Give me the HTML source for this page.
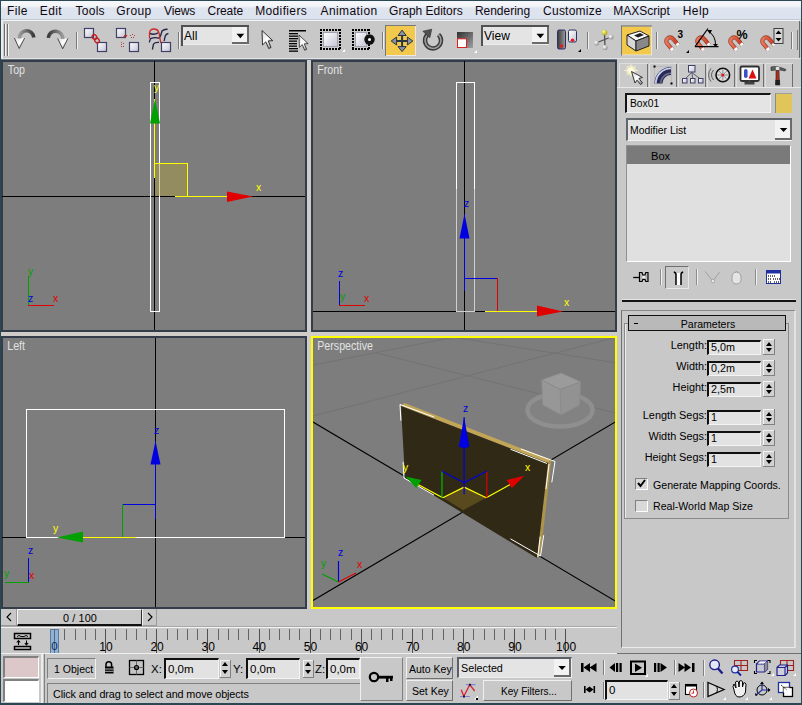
<!DOCTYPE html><html><head><meta charset="utf-8"><style>
html,body{margin:0;padding:0;width:802px;height:705px;overflow:hidden;background:#c8c8c8;font-family:"Liberation Sans", sans-serif;}
div{box-sizing:border-box;}
</style></head><body>
<div style="position:absolute;left:0px;top:0px;width:802px;height:19px;background:linear-gradient(#f6f7fa 0px,#f3f5f9 6px,#dfe5ef 8px,#dce3ee 18px);"></div>
<div style="position:absolute;left:0px;top:19px;width:802px;height:1px;background:#c4cad4;"></div>
<div style="position:absolute;left:0px;top:20px;width:802px;height:1px;background:#f4f4f4;"></div>
<div style="position:absolute;left:7.1px;top:4.84px;font-size:12px;line-height:12px;color:#100810;white-space:nowrap;transform-origin:0 0;letter-spacing:0.35px;">File</div>
<div style="position:absolute;left:39.8px;top:4.84px;font-size:12px;line-height:12px;color:#100810;white-space:nowrap;transform-origin:0 0;letter-spacing:0.38px;">Edit</div>
<div style="position:absolute;left:75.6px;top:4.84px;font-size:12px;line-height:12px;color:#100810;white-space:nowrap;transform-origin:0 0;letter-spacing:0.23px;">Tools</div>
<div style="position:absolute;left:116.3px;top:4.84px;font-size:12px;line-height:12px;color:#100810;white-space:nowrap;transform-origin:0 0;letter-spacing:0.4px;">Group</div>
<div style="position:absolute;left:164.1px;top:4.84px;font-size:12px;line-height:12px;color:#100810;white-space:nowrap;transform-origin:0 0;letter-spacing:-0.17px;">Views</div>
<div style="position:absolute;left:207.6px;top:4.84px;font-size:12px;line-height:12px;color:#100810;white-space:nowrap;transform-origin:0 0;letter-spacing:-0.11px;">Create</div>
<div style="position:absolute;left:255.2px;top:4.84px;font-size:12px;line-height:12px;color:#100810;white-space:nowrap;transform-origin:0 0;letter-spacing:0.36px;">Modifiers</div>
<div style="position:absolute;left:320.5px;top:4.84px;font-size:12px;line-height:12px;color:#100810;white-space:nowrap;transform-origin:0 0;letter-spacing:0.41px;">Animation</div>
<div style="position:absolute;left:389.1px;top:4.84px;font-size:12px;line-height:12px;color:#100810;white-space:nowrap;transform-origin:0 0;letter-spacing:-0.04px;">Graph Editors</div>
<div style="position:absolute;left:474.9px;top:4.84px;font-size:12px;line-height:12px;color:#100810;white-space:nowrap;transform-origin:0 0;letter-spacing:-0.01px;">Rendering</div>
<div style="position:absolute;left:543.1px;top:4.84px;font-size:12px;line-height:12px;color:#100810;white-space:nowrap;transform-origin:0 0;letter-spacing:0.23px;">Customize</div>
<div style="position:absolute;left:613.2px;top:4.84px;font-size:12px;line-height:12px;color:#100810;white-space:nowrap;transform-origin:0 0;letter-spacing:-0.01px;">MAXScript</div>
<div style="position:absolute;left:682.8px;top:4.84px;font-size:12px;line-height:12px;color:#100810;white-space:nowrap;transform-origin:0 0;letter-spacing:0.38px;">Help</div>
<div style="position:absolute;left:0px;top:58px;width:802px;height:1px;background:#e4e4e4;"></div>
<svg width="802" height="60" style="position:absolute;left:0;top:0;"><defs><linearGradient id="gsq" x1="0" y1="0" x2="1" y2="1"><stop offset="0" stop-color="#ffffff"/><stop offset="1" stop-color="#c4c4d4"/></linearGradient><linearGradient id="garc" x1="0" y1="0" x2="1" y2="0"><stop offset="0" stop-color="#9a9a9a"/><stop offset="1" stop-color="#3a3a3a"/></linearGradient><linearGradient id="garc2" x1="0" y1="0" x2="1" y2="0"><stop offset="0" stop-color="#3a3a3a"/><stop offset="1" stop-color="#9a9a9a"/></linearGradient><linearGradient id="gtri" x1="0" y1="0" x2="1" y2="1"><stop offset="0" stop-color="#d8d8d8"/><stop offset="0.5" stop-color="#ffffff"/><stop offset="1" stop-color="#808080"/></linearGradient><linearGradient id="gmag" x1="0" y1="0" x2="1" y2="1"><stop offset="0" stop-color="#f09070"/><stop offset="1" stop-color="#c83018"/></linearGradient><linearGradient id="gscl" x1="0" y1="0" x2="1" y2="1"><stop offset="0" stop-color="#303030"/><stop offset="1" stop-color="#a0a0a0"/></linearGradient><radialGradient id="gball" cx="0.35" cy="0.35" r="0.7"><stop offset="0" stop-color="#ffffff"/><stop offset="1" stop-color="#909090"/></radialGradient><radialGradient id="gballY" cx="0.35" cy="0.35" r="0.7"><stop offset="0" stop-color="#ffffa0"/><stop offset="1" stop-color="#b0a000"/></radialGradient></defs><rect x="1" y="21" width="2" height="37" fill="#ececec"/><rect x="4" y="24" width="1" height="32" fill="#707070"/><rect x="5" y="24" width="1" height="32" fill="#f4f4f4"/><rect x="7" y="24" width="1" height="32" fill="#707070"/><rect x="8" y="24" width="1" height="32" fill="#f4f4f4"/><rect x="76" y="32" width="1" height="17" fill="#7a7a7a"/><rect x="77" y="32" width="1" height="17" fill="#f0f0f0"/><rect x="178" y="32" width="1" height="17" fill="#7a7a7a"/><rect x="179" y="32" width="1" height="17" fill="#f0f0f0"/><rect x="382" y="32" width="1" height="17" fill="#7a7a7a"/><rect x="383" y="32" width="1" height="17" fill="#f0f0f0"/><rect x="587" y="32" width="1" height="17" fill="#7a7a7a"/><rect x="588" y="32" width="1" height="17" fill="#f0f0f0"/><rect x="656" y="32" width="1" height="17" fill="#7a7a7a"/><rect x="657" y="32" width="1" height="17" fill="#f0f0f0"/><rect x="791" y="32" width="1" height="17" fill="#7a7a7a"/><rect x="792" y="32" width="1" height="17" fill="#f0f0f0"/><path d="M14.4 38 L24.6 38 L19.2 48.5 Z" fill="url(#gtri)"/><path d="M14.4 38 L19.2 48.5 L24.6 38" fill="none" stroke="#3a3a3a" stroke-width="0.9"/><path d="M19.4 38.5 A7.2 7.2 0 0 1 33.8 37.5" stroke="url(#garc)" stroke-width="3.6" fill="none"/><path d="M57.7 38.4 L67.9 38.4 L62.7 48.8 Z" fill="url(#gtri)"/><path d="M57.7 38.4 L62.7 48.8 L67.9 38.4" fill="none" stroke="#3a3a3a" stroke-width="0.9"/><path d="M48.3 37.9 A7.2 7.2 0 0 1 62.7 38.9" stroke="url(#garc2)" stroke-width="3.6" fill="none"/><rect x="84.5" y="28.5" width="9" height="9" fill="url(#gsq)" stroke="#40406a" stroke-width="1.2"/><rect x="97.5" y="42.5" width="9" height="9" fill="url(#gsq)" stroke="#40406a" stroke-width="1.2"/><ellipse cx="94.5" cy="37" rx="2.6" ry="2.1" transform="rotate(45 94.5 37)" fill="none" stroke="#c02020" stroke-width="1.3"/><ellipse cx="97" cy="40.5" rx="2.6" ry="2.1" transform="rotate(45 97 40.5)" fill="none" stroke="#c02020" stroke-width="1.3"/><rect x="116.5" y="28.5" width="9" height="9" fill="url(#gsq)" stroke="#40406a" stroke-width="1.2"/><rect x="129.5" y="42.5" width="9" height="9" fill="url(#gsq)" stroke="#40406a" stroke-width="1.2"/><path d="M123.5 38 Q125 34 127 36" stroke="#c02020" stroke-width="1.3" fill="none"/><rect x="130" y="35" width="1" height="1" fill="#c04040"/><rect x="132" y="34" width="1" height="1" fill="#c04040"/><rect x="134" y="35" width="1" height="1" fill="#c04040"/><rect x="131" y="37" width="1" height="1" fill="#c04040"/><rect x="133" y="37" width="1" height="1" fill="#c04040"/><rect x="121" y="42" width="1" height="1" fill="#c04040"/><rect x="121" y="44" width="1" height="1" fill="#c04040"/><rect x="123" y="43" width="1" height="1" fill="#c04040"/><rect x="121" y="46" width="1" height="1" fill="#c04040"/><rect x="123" y="46" width="1" height="1" fill="#c04040"/><path d="M149.3 33.1 Q153.9 35.6 158.2 32.7 M149.3 42.4 L150.5 38.6 Q155 37 159 38.2 Q161 36 162 31 Q164 29 167.6 29.3 M152.4 49.5 L153.5 44.1 Q155 42 159 42.4 M164.1 41.2 L165.2 36 Q166 34 168.4 33.5" stroke="#22224a" stroke-width="1.3" fill="none"/><path d="M149.5 38.6 L149.5 33 Q150 29 153.8 29 Q158 29 159 33 L160.8 43" stroke="#d02828" stroke-width="1.3" fill="none"/><rect x="161.5" y="42.5" width="9" height="9" fill="url(#gsq)" stroke="#40406a" stroke-width="1.2"/><rect x="181" y="25" width="68" height="20" fill="#e4e4e4"/><rect x="181" y="44" width="68" height="1" fill="#ececec"/><rect x="181" y="25" width="68" height="2" fill="#505050"/><rect x="181" y="25" width="2" height="21" fill="#505050"/><rect x="232" y="27" width="17" height="17" fill="#f2f2f2"/><rect x="247" y="27" width="2" height="17" fill="#6a6a6a"/><rect x="232" y="42" width="17" height="2" fill="#6a6a6a"/><path d="M236.5 33.7 L244.2 33.7 L240.35 38.2 Z" fill="#000"/><text x="184" y="40" font-size="12" font-family="Liberation Sans" fill="#000">All</text><path transform="translate(262 30.5) scale(1)" d="M0 0 L0.5 14.5 L3.8 11.3 L6.7 18 L9 17 L6.3 10.4 L10.8 10.2 Z" fill="url(#gtri)" stroke="#202020" stroke-width="0.9"/><rect x="289" y="30" width="17" height="1.5" fill="#000"/><rect x="289" y="33.0" width="9" height="1.3" fill="#000"/><rect x="289" y="35.5" width="9" height="1.3" fill="#000"/><rect x="289" y="38.0" width="9" height="1.3" fill="#000"/><rect x="289" y="40.5" width="8" height="1.3" fill="#000"/><rect x="289" y="43.0" width="8" height="1.3" fill="#000"/><rect x="289" y="45.5" width="8" height="1.3" fill="#000"/><rect x="289" y="48.0" width="9" height="1.3" fill="#000"/><rect x="289" y="50.5" width="9" height="1.3" fill="#000"/><path transform="translate(299 35) scale(0.85)" d="M0 0 L0.5 14.5 L3.8 11.3 L6.7 18 L9 17 L6.3 10.4 L10.8 10.2 Z" fill="url(#gtri)" stroke="#202020" stroke-width="0.9"/><rect x="320" y="29" width="2" height="2" fill="#000"/><rect x="320" y="48" width="2" height="2" fill="#000"/><rect x="323" y="29" width="2" height="2" fill="#000"/><rect x="323" y="48" width="2" height="2" fill="#000"/><rect x="326" y="29" width="2" height="2" fill="#000"/><rect x="326" y="48" width="2" height="2" fill="#000"/><rect x="329" y="29" width="2" height="2" fill="#000"/><rect x="329" y="48" width="2" height="2" fill="#000"/><rect x="332" y="29" width="2" height="2" fill="#000"/><rect x="332" y="48" width="2" height="2" fill="#000"/><rect x="335" y="29" width="2" height="2" fill="#000"/><rect x="335" y="48" width="2" height="2" fill="#000"/><rect x="338" y="29" width="2" height="2" fill="#000"/><rect x="338" y="48" width="2" height="2" fill="#000"/><rect x="320" y="29" width="2" height="2" fill="#000"/><rect x="339" y="29" width="2" height="2" fill="#000"/><rect x="320" y="32" width="2" height="2" fill="#000"/><rect x="339" y="32" width="2" height="2" fill="#000"/><rect x="320" y="35" width="2" height="2" fill="#000"/><rect x="339" y="35" width="2" height="2" fill="#000"/><rect x="320" y="38" width="2" height="2" fill="#000"/><rect x="339" y="38" width="2" height="2" fill="#000"/><rect x="320" y="41" width="2" height="2" fill="#000"/><rect x="339" y="41" width="2" height="2" fill="#000"/><rect x="320" y="44" width="2" height="2" fill="#000"/><rect x="339" y="44" width="2" height="2" fill="#000"/><rect x="320" y="47" width="2" height="2" fill="#000"/><rect x="339" y="47" width="2" height="2" fill="#000"/><rect x="323.5" y="32.5" width="14" height="14" fill="url(#gsq)" stroke="#a0a0b0" stroke-width="1"/><path d="M342 52 L345 49 L345 52 Z" fill="#fff"/><rect x="352" y="29" width="2" height="2" fill="#000"/><rect x="352" y="48" width="2" height="2" fill="#000"/><rect x="355" y="29" width="2" height="2" fill="#000"/><rect x="355" y="48" width="2" height="2" fill="#000"/><rect x="358" y="29" width="2" height="2" fill="#000"/><rect x="358" y="48" width="2" height="2" fill="#000"/><rect x="361" y="29" width="2" height="2" fill="#000"/><rect x="361" y="48" width="2" height="2" fill="#000"/><rect x="364" y="29" width="2" height="2" fill="#000"/><rect x="364" y="48" width="2" height="2" fill="#000"/><rect x="367" y="29" width="2" height="2" fill="#000"/><rect x="367" y="48" width="2" height="2" fill="#000"/><rect x="352" y="29" width="2" height="2" fill="#000"/><rect x="368" y="29" width="2" height="2" fill="#000"/><rect x="352" y="32" width="2" height="2" fill="#000"/><rect x="368" y="32" width="2" height="2" fill="#000"/><rect x="352" y="35" width="2" height="2" fill="#000"/><rect x="368" y="35" width="2" height="2" fill="#000"/><rect x="352" y="38" width="2" height="2" fill="#000"/><rect x="368" y="38" width="2" height="2" fill="#000"/><rect x="352" y="41" width="2" height="2" fill="#000"/><rect x="368" y="41" width="2" height="2" fill="#000"/><rect x="352" y="44" width="2" height="2" fill="#000"/><rect x="368" y="44" width="2" height="2" fill="#000"/><rect x="352" y="47" width="2" height="2" fill="#000"/><rect x="368" y="47" width="2" height="2" fill="#000"/><rect x="355.5" y="32.5" width="11" height="14" fill="url(#gsq)" stroke="#a0a0b0" stroke-width="1"/><circle cx="369.5" cy="39.5" r="5.2" fill="#101010"/><circle cx="369.5" cy="39.5" r="1.5" fill="#fff"/><rect x="385" y="25" width="31" height="31" fill="#a8a8a8"/><rect x="386" y="26" width="30" height="30" fill="#e8e8e8"/><rect x="386" y="26" width="29" height="29" fill="#f2c94c"/><rect x="385" y="25" width="31" height="1" fill="#787878"/><rect x="385" y="25" width="1" height="31" fill="#787878"/><path d="M402.1 33 L402.1 49 M394 41 L410 41" stroke="#2c3440" stroke-width="2"/><path d="M402.1 30.1 L398 35.5 L406.2 35.5 Z M402.1 51.6 L398 46.6 L406.2 46.6 Z M391.2 41 L396.6 37 L396.6 45 Z M412.8 41 L407.4 37 L407.4 45 Z" fill="#8a929c" stroke="#2c3440" stroke-width="1"/><path d="M438.5 34.6 A8 8 0 1 1 429.8 33.1" stroke="#3a3a3a" stroke-width="4.4" fill="none"/><path d="M438.5 34.6 A8 8 0 1 1 429.8 33.1" stroke="#b8b8b8" stroke-width="1.6" fill="none" opacity="0.8"/><path d="M422.8 31.2 L431.8 29.2 L429.8 37.8 Z" fill="#505050" stroke="#303030" stroke-width="0.6"/><rect x="457" y="32" width="16" height="16" fill="url(#gscl)"/><rect x="457.5" y="38.8" width="9" height="8.7" fill="#fff" stroke="#e02020" stroke-width="1"/><path d="M474 53 L477 50 L477 53 Z" fill="#fff"/><rect x="481" y="25" width="68" height="20" fill="#e4e4e4"/><rect x="481" y="44" width="68" height="1" fill="#ececec"/><rect x="481" y="25" width="68" height="2" fill="#505050"/><rect x="481" y="25" width="2" height="21" fill="#505050"/><rect x="532" y="27" width="17" height="17" fill="#f2f2f2"/><rect x="547" y="27" width="2" height="17" fill="#6a6a6a"/><rect x="532" y="42" width="17" height="2" fill="#6a6a6a"/><path d="M536.5 33.7 L544.2 33.7 L540.35 38.2 Z" fill="#000"/><text x="484" y="40" font-size="12" font-family="Liberation Sans" fill="#000">View</text><rect x="557.5" y="30" width="8" height="19" rx="1.5" fill="url(#garc2)" stroke="#303068" stroke-width="1"/><rect x="568.5" y="30" width="8" height="12" rx="1.5" fill="url(#gsq)" stroke="#303068" stroke-width="1"/><circle cx="561.5" cy="46" r="1.8" fill="#e02020"/><circle cx="572.5" cy="40.2" r="1.8" fill="#e02020"/><path d="M578 52 L581 49 L581 52 Z" fill="#000"/><path d="M604.5 33 L605 47 M596 43 L611 37" stroke="#505050" stroke-width="1.3"/><circle cx="604.5" cy="32.5" r="2.8" fill="url(#gballY)"/><circle cx="611" cy="37" r="2.6" fill="url(#gball)"/><circle cx="596.5" cy="43" r="2.6" fill="url(#gball)"/><circle cx="605" cy="47.5" r="2.6" fill="url(#gball)"/><rect x="621" y="25.5" width="31" height="30" fill="#a8a8a8"/><rect x="622" y="26.5" width="30" height="29" fill="#e8e8e8"/><rect x="622" y="26.5" width="29" height="28" fill="#f2c94c"/><rect x="621" y="25.5" width="31" height="1" fill="#787878"/><rect x="621" y="25.5" width="1" height="30" fill="#787878"/><path d="M627 35 L640 31 L649 36 L636 41 Z" fill="#f8f8f8" stroke="#202020" stroke-width="1"/><path d="M627 35 L636 41 L636 51 L627 45 Z" fill="#d8d8d8" stroke="#202020" stroke-width="1"/><path d="M636 41 L649 36 L649 46 L636 51 Z" fill="#888888" stroke="#202020" stroke-width="1"/><path d="M634 35.5 L640 33 L644 35 L638 37.5 Z" fill="#202020"/><g transform="translate(664 35) rotate(-40 7 8)"><path d="M2 6 A5.5 5.5 0 0 1 13 6 L13 14 L9.5 14 L9.5 6 A2 2 0 0 0 5.5 6 L5.5 14 L2 14 Z" fill="url(#gmag)" stroke="#802010" stroke-width="0.6"/><rect x="2" y="12" width="3.5" height="2.5" fill="#fff"/><rect x="9.5" y="12" width="3.5" height="2.5" fill="#fff"/></g><g transform="translate(695 35) rotate(-40 7 8)"><path d="M2 6 A5.5 5.5 0 0 1 13 6 L13 14 L9.5 14 L9.5 6 A2 2 0 0 0 5.5 6 L5.5 14 L2 14 Z" fill="url(#gmag)" stroke="#802010" stroke-width="0.6"/><rect x="2" y="12" width="3.5" height="2.5" fill="#fff"/><rect x="9.5" y="12" width="3.5" height="2.5" fill="#fff"/></g><g transform="translate(728 35) rotate(-40 7 8)"><path d="M2 6 A5.5 5.5 0 0 1 13 6 L13 14 L9.5 14 L9.5 6 A2 2 0 0 0 5.5 6 L5.5 14 L2 14 Z" fill="url(#gmag)" stroke="#802010" stroke-width="0.6"/><rect x="2" y="12" width="3.5" height="2.5" fill="#fff"/><rect x="9.5" y="12" width="3.5" height="2.5" fill="#fff"/></g><g transform="translate(760 35) rotate(-40 7 8)"><path d="M2 6 A5.5 5.5 0 0 1 13 6 L13 14 L9.5 14 L9.5 6 A2 2 0 0 0 5.5 6 L5.5 14 L2 14 Z" fill="url(#gmag)" stroke="#802010" stroke-width="0.6"/><rect x="2" y="12" width="3.5" height="2.5" fill="#fff"/><rect x="9.5" y="12" width="3.5" height="2.5" fill="#fff"/></g><text x="677.5" y="38" font-size="10" font-weight="bold" font-family="Liberation Sans" fill="#000">3</text><path d="M686 53 L689 50 L689 53 Z" fill="#000"/><path d="M695 46.7 L718.5 46.7 M695 46.7 L708 28.5" stroke="#000" stroke-width="1.2" fill="none"/><path d="M709 31.5 A16 16 0 0 1 715.5 45" stroke="#000" stroke-width="1" fill="none"/><path d="M707 30 L712 30 L710 34 Z M713 44 L718 44 L715.5 47 Z" fill="#000"/><text x="736.5" y="38.8" font-size="12.5" font-weight="bold" font-family="Liberation Sans" fill="#000">%</text><rect x="774" y="28.5" width="9" height="15" fill="#d8d8d8" stroke="#404040" stroke-width="1"/><path d="M775.5 34 L778.5 30.5 L781.5 34 Z M775.5 38 L778.5 41.5 L781.5 38 Z" fill="#000"/><rect x="797" y="30" width="1" height="20" fill="#7a7a7a"/><rect x="799" y="21" width="1" height="37" fill="#6a6a6a"/></svg>
<div style="position:absolute;left:0px;top:59px;width:617px;height:1px;background:#6a7480;"></div>
<div style="position:absolute;left:0px;top:60px;width:617px;height:549px;background:#d0cdc8;"></div>
<div style="position:absolute;left:1px;top:60px;width:306px;height:272px;background:#7d7d7d;border:2px solid #333d4a;"></div>
<div style="position:absolute;left:311px;top:60px;width:306px;height:272px;background:#7d7d7d;border:2px solid #333d4a;"></div>
<div style="position:absolute;left:1px;top:336px;width:306px;height:273px;background:#7d7d7d;border:2px solid #333d4a;"></div>
<div style="position:absolute;left:311px;top:336px;width:306px;height:273px;background:#7d7d7d;border:2px solid #ffff00;"></div>
<div style="position:absolute;left:619px;top:63px;width:29px;height:24px;background:#cacaca;box-shadow: inset 1px 1px 0 #dedede, inset -1px 0 0 #6e6e6e;"></div>
<div style="position:absolute;left:649px;top:63px;width:28px;height:24px;background:#cacaca;box-shadow: inset 1px 1px 0 #dedede, inset -1px 0 0 #6e6e6e;"></div>
<div style="position:absolute;left:678px;top:63px;width:28px;height:24px;background:#cacaca;box-shadow: inset 1px 1px 0 #dedede, inset -1px 0 0 #6e6e6e;"></div>
<div style="position:absolute;left:707px;top:63px;width:28px;height:24px;background:#cacaca;box-shadow: inset 1px 1px 0 #dedede, inset -1px 0 0 #6e6e6e;"></div>
<div style="position:absolute;left:736px;top:63px;width:28px;height:24px;background:#cacaca;box-shadow: inset 1px 1px 0 #dedede, inset -1px 0 0 #6e6e6e;"></div>
<div style="position:absolute;left:765px;top:63px;width:28px;height:24px;background:#cacaca;box-shadow: inset 1px 1px 0 #dedede, inset -1px 0 0 #6e6e6e;"></div>
<div style="position:absolute;left:617px;top:87px;width:185px;height:1px;background:#e8e8e8;"></div>
<div style="position:absolute;left:625px;top:93px;width:146px;height:20px;background:#e4e4e4;border-top:2px solid #141414;border-left:2px solid #141414;border-bottom:1px solid #f4f4f4;border-right:1px solid #f4f4f4;"></div>
<div style="position:absolute;left:629.5px;top:97.10px;font-size:11.7px;line-height:11.7px;color:#000;white-space:nowrap;transform-origin:0 0;transform:scaleX(0.88);">Box01</div>
<div style="position:absolute;left:775px;top:93px;width:17px;height:20px;background:#e2c55a;border-left:1px solid #8a8a8a;border-top:1px solid #a0a0a0;"></div>
<div style="position:absolute;left:626px;top:118px;width:166px;height:23px;background:#e4e4e4;border-top:2px solid #60666c;border-left:2px solid #60666c;border-bottom:1px solid #f0f0f0;"></div>
<div style="position:absolute;left:775px;top:120px;width:17px;height:20px;background:#f2f2f2;border-right:2px solid #6a6a6a;border-bottom:2px solid #6a6a6a;"></div>
<svg style="position:absolute;left:775px;top:120px" width="17" height="20"><path d="M4.8 8 L12.3 8 L8.55 12 Z" fill="#000"/></svg>
<div style="position:absolute;left:630.3px;top:124.10px;font-size:11.7px;line-height:11.7px;color:#000;white-space:nowrap;transform-origin:0 0;transform:scaleX(0.89);">Modifier List</div>
<div style="position:absolute;left:626px;top:145px;width:165px;height:117px;background:#e0e0e0;border-top:1px solid #909090;border-left:1px solid #909090;border-right:1px solid #fff;border-bottom:1px solid #fff;"></div>
<div style="position:absolute;left:627px;top:146px;width:163px;height:18px;background:#7a7a7a;"></div>
<div style="position:absolute;left:650.5px;top:149.90px;font-size:11.7px;line-height:11.7px;color:#000;white-space:nowrap;transform-origin:0 0;transform:scaleX(0.95);">Box</div>
<div style="position:absolute;left:665px;top:266px;width:24px;height:23px;background:#cacaca;border-top:1px solid #707070;border-left:1px solid #707070;border-right:1px solid #e8e8e8;border-bottom:1px solid #e8e8e8;"></div>
<div style="position:absolute;left:660px;top:269px;width:1px;height:16px;background:#8c8c8c;"></div>
<div style="position:absolute;left:661px;top:269px;width:1px;height:16px;background:#f0f0f0;"></div>
<div style="position:absolute;left:696px;top:269px;width:1px;height:16px;background:#8c8c8c;"></div>
<div style="position:absolute;left:697px;top:269px;width:1px;height:16px;background:#f0f0f0;"></div>
<div style="position:absolute;left:755px;top:269px;width:1px;height:16px;background:#8c8c8c;"></div>
<div style="position:absolute;left:756px;top:269px;width:1px;height:16px;background:#f0f0f0;"></div>
<div style="position:absolute;left:622px;top:299px;width:174px;height:1px;background:#e4e4e4;"></div>
<div style="position:absolute;left:622px;top:300px;width:174px;height:2px;background:#141414;"></div>
<div style="position:absolute;left:621px;top:310px;width:175px;height:338px;border-top:1px solid #8a8a8a;border-left:1px solid #707070;border-right:2px solid #e2e2e2;border-bottom:1px solid #ececec;"></div>
<div style="position:absolute;left:628px;top:315px;width:158px;height:16px;background:#b9b9b9;border:1px solid #101010;"></div>
<div style="position:absolute;left:507.79999999999995px;width:400px;text-align:center;top:317.60px;font-size:11.7px;line-height:11.7px;color:#000;white-space:nowrap;transform-origin:50% 0;transform:scaleX(0.9);">Parameters</div>
<div style="position:absolute;left:634px;top:323px;width:4px;height:1px;background:#000;"></div>
<div style="position:absolute;left:624px;top:323px;width:165px;height:196px;border:1px solid #8a8a8a;border-top:none;box-shadow: inset 1px 0 0 #ececec;"></div>
<div style="position:absolute;left:786px;top:323px;width:3px;height:1px;background:#8a8a8a;"></div>
<div style="position:absolute;left:624px;top:323px;width:4px;height:1px;background:#8a8a8a;"></div>
<div style="position:absolute;right:95.20000000000005px;top:339.30px;font-size:11.7px;line-height:11.7px;color:#000;white-space:nowrap;transform-origin:100% 0;transform:scaleX(0.93);">Length:</div>
<div style="position:absolute;left:707px;top:340px;width:54px;height:15px;background:#e2e2e2;border-top:2px solid #101010;border-left:2px solid #101010;border-bottom:1px solid #f4f4f4;border-right:1px solid #f4f4f4;"></div>
<div style="position:absolute;left:711.2px;top:340.60px;font-size:11.7px;line-height:11.7px;color:#000;white-space:nowrap;transform-origin:0 0;transform:scaleX(0.92);">5,0m</div>
<div style="position:absolute;left:763px;top:339px;width:12px;height:16px;background:#d0d0d0;border-right:1px solid #808080;border-bottom:1px solid #808080;box-shadow: inset 1px 1px 0 #f4f4f4;"></div>
<div style="position:absolute;left:766px;top:342px;width:0;height:0;border-left:3px solid transparent;border-right:3px solid transparent;border-bottom:4px solid #000;"></div>
<div style="position:absolute;left:766px;top:348px;width:0;height:0;border-left:3px solid transparent;border-right:3px solid transparent;border-top:4px solid #000;"></div>
<div style="position:absolute;right:95.20000000000005px;top:360.30px;font-size:11.7px;line-height:11.7px;color:#000;white-space:nowrap;transform-origin:100% 0;transform:scaleX(0.93);">Width:</div>
<div style="position:absolute;left:707px;top:361px;width:54px;height:15px;background:#e2e2e2;border-top:2px solid #101010;border-left:2px solid #101010;border-bottom:1px solid #f4f4f4;border-right:1px solid #f4f4f4;"></div>
<div style="position:absolute;left:711.2px;top:361.60px;font-size:11.7px;line-height:11.7px;color:#000;white-space:nowrap;transform-origin:0 0;transform:scaleX(0.92);">0,2m</div>
<div style="position:absolute;left:763px;top:360px;width:12px;height:16px;background:#d0d0d0;border-right:1px solid #808080;border-bottom:1px solid #808080;box-shadow: inset 1px 1px 0 #f4f4f4;"></div>
<div style="position:absolute;left:766px;top:363px;width:0;height:0;border-left:3px solid transparent;border-right:3px solid transparent;border-bottom:4px solid #000;"></div>
<div style="position:absolute;left:766px;top:369px;width:0;height:0;border-left:3px solid transparent;border-right:3px solid transparent;border-top:4px solid #000;"></div>
<div style="position:absolute;right:95.20000000000005px;top:381.30px;font-size:11.7px;line-height:11.7px;color:#000;white-space:nowrap;transform-origin:100% 0;transform:scaleX(0.93);">Height:</div>
<div style="position:absolute;left:707px;top:382px;width:54px;height:15px;background:#e2e2e2;border-top:2px solid #101010;border-left:2px solid #101010;border-bottom:1px solid #f4f4f4;border-right:1px solid #f4f4f4;"></div>
<div style="position:absolute;left:711.2px;top:382.60px;font-size:11.7px;line-height:11.7px;color:#000;white-space:nowrap;transform-origin:0 0;transform:scaleX(0.92);">2,5m</div>
<div style="position:absolute;left:763px;top:381px;width:12px;height:16px;background:#d0d0d0;border-right:1px solid #808080;border-bottom:1px solid #808080;box-shadow: inset 1px 1px 0 #f4f4f4;"></div>
<div style="position:absolute;left:766px;top:384px;width:0;height:0;border-left:3px solid transparent;border-right:3px solid transparent;border-bottom:4px solid #000;"></div>
<div style="position:absolute;left:766px;top:390px;width:0;height:0;border-left:3px solid transparent;border-right:3px solid transparent;border-top:4px solid #000;"></div>
<div style="position:absolute;right:95.20000000000005px;top:409.30px;font-size:11.7px;line-height:11.7px;color:#000;white-space:nowrap;transform-origin:100% 0;transform:scaleX(0.93);">Length Segs:</div>
<div style="position:absolute;left:707px;top:410px;width:54px;height:15px;background:#e2e2e2;border-top:2px solid #101010;border-left:2px solid #101010;border-bottom:1px solid #f4f4f4;border-right:1px solid #f4f4f4;"></div>
<div style="position:absolute;left:711.2px;top:410.60px;font-size:11.7px;line-height:11.7px;color:#000;white-space:nowrap;transform-origin:0 0;transform:scaleX(0.92);">1</div>
<div style="position:absolute;left:763px;top:409px;width:12px;height:16px;background:#d0d0d0;border-right:1px solid #808080;border-bottom:1px solid #808080;box-shadow: inset 1px 1px 0 #f4f4f4;"></div>
<div style="position:absolute;left:766px;top:412px;width:0;height:0;border-left:3px solid transparent;border-right:3px solid transparent;border-bottom:4px solid #000;"></div>
<div style="position:absolute;left:766px;top:418px;width:0;height:0;border-left:3px solid transparent;border-right:3px solid transparent;border-top:4px solid #000;"></div>
<div style="position:absolute;right:95.20000000000005px;top:430.30px;font-size:11.7px;line-height:11.7px;color:#000;white-space:nowrap;transform-origin:100% 0;transform:scaleX(0.93);">Width Segs:</div>
<div style="position:absolute;left:707px;top:431px;width:54px;height:15px;background:#e2e2e2;border-top:2px solid #101010;border-left:2px solid #101010;border-bottom:1px solid #f4f4f4;border-right:1px solid #f4f4f4;"></div>
<div style="position:absolute;left:711.2px;top:431.60px;font-size:11.7px;line-height:11.7px;color:#000;white-space:nowrap;transform-origin:0 0;transform:scaleX(0.92);">1</div>
<div style="position:absolute;left:763px;top:430px;width:12px;height:16px;background:#d0d0d0;border-right:1px solid #808080;border-bottom:1px solid #808080;box-shadow: inset 1px 1px 0 #f4f4f4;"></div>
<div style="position:absolute;left:766px;top:433px;width:0;height:0;border-left:3px solid transparent;border-right:3px solid transparent;border-bottom:4px solid #000;"></div>
<div style="position:absolute;left:766px;top:439px;width:0;height:0;border-left:3px solid transparent;border-right:3px solid transparent;border-top:4px solid #000;"></div>
<div style="position:absolute;right:95.20000000000005px;top:451.30px;font-size:11.7px;line-height:11.7px;color:#000;white-space:nowrap;transform-origin:100% 0;transform:scaleX(0.93);">Height Segs:</div>
<div style="position:absolute;left:707px;top:452px;width:54px;height:15px;background:#e2e2e2;border-top:2px solid #101010;border-left:2px solid #101010;border-bottom:1px solid #f4f4f4;border-right:1px solid #f4f4f4;"></div>
<div style="position:absolute;left:711.2px;top:452.60px;font-size:11.7px;line-height:11.7px;color:#000;white-space:nowrap;transform-origin:0 0;transform:scaleX(0.92);">1</div>
<div style="position:absolute;left:763px;top:451px;width:12px;height:16px;background:#d0d0d0;border-right:1px solid #808080;border-bottom:1px solid #808080;box-shadow: inset 1px 1px 0 #f4f4f4;"></div>
<div style="position:absolute;left:766px;top:454px;width:0;height:0;border-left:3px solid transparent;border-right:3px solid transparent;border-bottom:4px solid #000;"></div>
<div style="position:absolute;left:766px;top:460px;width:0;height:0;border-left:3px solid transparent;border-right:3px solid transparent;border-top:4px solid #000;"></div>
<div style="position:absolute;left:635px;top:478px;width:13px;height:12px;background:#d8d8d8;border-top:1px solid #808080;border-left:1px solid #808080;border-bottom:1px solid #fff;border-right:1px solid #fff;"></div>
<svg style="position:absolute;left:635px;top:477px" width="13" height="13"><path d="M3 6 L5.5 9 L10 3" stroke="#000" stroke-width="2" fill="none"/></svg>
<div style="position:absolute;left:653px;top:479.53px;font-size:10.6px;line-height:10.6px;color:#000;white-space:nowrap;transform-origin:0 0;">Generate Mapping Coords.</div>
<div style="position:absolute;left:635px;top:500px;width:13px;height:12px;background:#d8d8d8;border-top:1px solid #808080;border-left:1px solid #808080;border-bottom:1px solid #fff;border-right:1px solid #fff;"></div>
<div style="position:absolute;left:653px;top:501.03px;font-size:10.6px;line-height:10.6px;color:#000;white-space:nowrap;transform-origin:0 0;">Real-World Map Size</div>
<div style="position:absolute;left:0px;top:609px;width:617px;height:18px;background:#c8c8c8;"></div>
<div style="position:absolute;left:1px;top:609px;width:16px;height:17px;background:#c8c8c8;border-right:1px solid #9a9a9a;border-bottom:1px solid #9a9a9a;"></div>
<svg style="position:absolute;left:4px;top:611px" width="10" height="12"><path d="M7 2 L3 6 L7 10" stroke="#000" stroke-width="1.1" fill="none"/></svg>
<div style="position:absolute;left:17px;top:609px;width:125px;height:17px;background:#c8c8c8;border-top:1px solid #f8f8f8;border-left:1px solid #f8f8f8;border-right:1px solid #303030;border-bottom:2px solid #101010;"></div>
<div style="position:absolute;left:-120.2px;width:400px;text-align:center;top:612.10px;font-size:11.7px;line-height:11.7px;color:#000;white-space:nowrap;transform-origin:50% 0;transform:scaleX(0.93);letter-spacing:0.1px;">0 / 100</div>
<div style="position:absolute;left:142px;top:609px;width:15px;height:17px;background:#c8c8c8;border-right:1px solid #9a9a9a;border-bottom:1px solid #9a9a9a;border-left:1px solid #f0f0f0;"></div>
<svg style="position:absolute;left:145px;top:611px" width="10" height="12"><path d="M3 2 L7 6 L3 10" stroke="#000" stroke-width="1.1" fill="none"/></svg>
<div style="position:absolute;left:0px;top:626px;width:617px;height:1px;background:#a8a8a8;"></div>
<div style="position:absolute;left:0px;top:627px;width:617px;height:1px;background:#f4f4f4;"></div>
<svg width="802" height="705" style="position:absolute;left:0;top:0;"><rect x="54" y="629" width="1" height="24" fill="#505050"/><rect x="64" y="629" width="1" height="11" fill="#646464"/><rect x="75" y="629" width="1" height="11" fill="#646464"/><rect x="85" y="629" width="1" height="11" fill="#646464"/><rect x="95" y="629" width="1" height="11" fill="#646464"/><rect x="105" y="629" width="1" height="24" fill="#505050"/><rect x="115" y="629" width="1" height="11" fill="#646464"/><rect x="126" y="629" width="1" height="11" fill="#646464"/><rect x="136" y="629" width="1" height="11" fill="#646464"/><rect x="146" y="629" width="1" height="11" fill="#646464"/><rect x="156" y="629" width="1" height="24" fill="#505050"/><rect x="167" y="629" width="1" height="11" fill="#646464"/><rect x="177" y="629" width="1" height="11" fill="#646464"/><rect x="187" y="629" width="1" height="11" fill="#646464"/><rect x="197" y="629" width="1" height="11" fill="#646464"/><rect x="207" y="629" width="1" height="24" fill="#505050"/><rect x="218" y="629" width="1" height="11" fill="#646464"/><rect x="228" y="629" width="1" height="11" fill="#646464"/><rect x="238" y="629" width="1" height="11" fill="#646464"/><rect x="248" y="629" width="1" height="11" fill="#646464"/><rect x="259" y="629" width="1" height="24" fill="#505050"/><rect x="269" y="629" width="1" height="11" fill="#646464"/><rect x="279" y="629" width="1" height="11" fill="#646464"/><rect x="289" y="629" width="1" height="11" fill="#646464"/><rect x="299" y="629" width="1" height="11" fill="#646464"/><rect x="310" y="629" width="1" height="24" fill="#505050"/><rect x="320" y="629" width="1" height="11" fill="#646464"/><rect x="330" y="629" width="1" height="11" fill="#646464"/><rect x="340" y="629" width="1" height="11" fill="#646464"/><rect x="351" y="629" width="1" height="11" fill="#646464"/><rect x="361" y="629" width="1" height="24" fill="#505050"/><rect x="371" y="629" width="1" height="11" fill="#646464"/><rect x="381" y="629" width="1" height="11" fill="#646464"/><rect x="392" y="629" width="1" height="11" fill="#646464"/><rect x="402" y="629" width="1" height="11" fill="#646464"/><rect x="412" y="629" width="1" height="24" fill="#505050"/><rect x="422" y="629" width="1" height="11" fill="#646464"/><rect x="432" y="629" width="1" height="11" fill="#646464"/><rect x="443" y="629" width="1" height="11" fill="#646464"/><rect x="453" y="629" width="1" height="11" fill="#646464"/><rect x="463" y="629" width="1" height="24" fill="#505050"/><rect x="473" y="629" width="1" height="11" fill="#646464"/><rect x="484" y="629" width="1" height="11" fill="#646464"/><rect x="494" y="629" width="1" height="11" fill="#646464"/><rect x="504" y="629" width="1" height="11" fill="#646464"/><rect x="514" y="629" width="1" height="24" fill="#505050"/><rect x="524" y="629" width="1" height="11" fill="#646464"/><rect x="535" y="629" width="1" height="11" fill="#646464"/><rect x="545" y="629" width="1" height="11" fill="#646464"/><rect x="555" y="629" width="1" height="11" fill="#646464"/><rect x="565" y="629" width="1" height="24" fill="#505050"/><text x="105.9" y="651" text-anchor="middle" font-size="12" font-family="Liberation Sans" fill="#000">10</text><text x="157.1" y="651" text-anchor="middle" font-size="12" font-family="Liberation Sans" fill="#000">20</text><text x="208.2" y="651" text-anchor="middle" font-size="12" font-family="Liberation Sans" fill="#000">30</text><text x="259.3" y="651" text-anchor="middle" font-size="12" font-family="Liberation Sans" fill="#000">40</text><text x="310.5" y="651" text-anchor="middle" font-size="12" font-family="Liberation Sans" fill="#000">50</text><text x="361.6" y="651" text-anchor="middle" font-size="12" font-family="Liberation Sans" fill="#000">60</text><text x="412.7" y="651" text-anchor="middle" font-size="12" font-family="Liberation Sans" fill="#000">70</text><text x="463.8" y="651" text-anchor="middle" font-size="12" font-family="Liberation Sans" fill="#000">80</text><text x="515.0" y="651" text-anchor="middle" font-size="12" font-family="Liberation Sans" fill="#000">90</text><text x="566.1" y="651" text-anchor="middle" font-size="12" font-family="Liberation Sans" fill="#000">100</text></svg>
<div style="position:absolute;left:50px;top:629px;width:9px;height:25px;background:#92b2d2;border:1px solid #5a7ca0;"></div>
<div style="position:absolute;left:54px;top:629px;width:1px;height:25px;background:#4a6a90;"></div>
<div style="position:absolute;left:-145.5px;width:400px;text-align:center;top:641.27px;font-size:11.5px;line-height:11.5px;color:#0a2a60;white-space:nowrap;transform-origin:50% 0;">0</div>
<div style="position:absolute;left:0px;top:653px;width:802px;height:1px;background:#f0f0f0;"></div>
<svg style="position:absolute;left:13px;top:632px" width="20" height="19"><rect x="1.5" y="1.5" width="16" height="5" fill="none" stroke="#000" stroke-width="1.5"/><path d="M4 4.5 Q6 2.5 8 4.5 L11 4.5 Q13 2.5 15 4.5" stroke="#000" fill="none" stroke-width="1"/><path d="M5.5 13 L5.5 8.5 M3.8 10.5 L5.5 8.5 L7.2 10.5 M13.5 8.5 L13.5 13 M11.8 11 L13.5 13 L15.2 11" stroke="#000" fill="none" stroke-width="1.1"/><rect x="1.5" y="14.5" width="16" height="3" fill="none" stroke="#000" stroke-width="1.5"/></svg>
<div style="position:absolute;left:3px;top:656px;width:36px;height:22px;background:#dcc8c8;border-top:2px solid #808080;border-left:2px solid #808080;border-right:1px solid #fff;border-bottom:1px solid #fff;"></div>
<div style="position:absolute;left:3px;top:679px;width:36px;height:23px;background:#ffffff;border-top:2px solid #808080;border-left:2px solid #808080;border-right:1px solid #fff;border-bottom:1px solid #fff;"></div>
<div style="position:absolute;left:41px;top:654px;width:2px;height:49px;background:#ececec;"></div>
<div style="position:absolute;left:44px;top:654px;width:1px;height:49px;background:#808080;"></div>
<div style="position:absolute;left:47px;top:658px;width:49px;height:21px;background:#c8c8c8;border-top:1px solid #808080;border-left:1px solid #808080;border-right:1px solid #f0f0f0;border-bottom:1px solid #f0f0f0;"></div>
<div style="position:absolute;left:53.5px;top:663.10px;font-size:11.7px;line-height:11.7px;color:#000;white-space:nowrap;transform-origin:0 0;transform:scaleX(0.9);">1 Object</div>
<div style="position:absolute;left:47px;top:683px;width:313px;height:20px;background:#c8c8c8;border-top:1px solid #808080;border-left:1px solid #808080;"></div>
<div style="position:absolute;left:53px;top:688.86px;font-size:10.8px;line-height:10.8px;color:#000;white-space:nowrap;transform-origin:0 0;letter-spacing:-0.1px;">Click and drag to select and move objects</div>
<div style="position:absolute;left:151px;top:663.77px;font-size:11.5px;line-height:11.5px;color:#000;white-space:nowrap;transform-origin:0 0;">X:</div>
<div style="position:absolute;left:233px;top:663.77px;font-size:11.5px;line-height:11.5px;color:#000;white-space:nowrap;transform-origin:0 0;">Y:</div>
<div style="position:absolute;left:315px;top:663.77px;font-size:11.5px;line-height:11.5px;color:#000;white-space:nowrap;transform-origin:0 0;">Z:</div>
<div style="position:absolute;left:164px;top:658px;width:55px;height:21px;background:#e2e2e2;border-top:2px solid #101010;border-left:2px solid #101010;border-bottom:1px solid #f4f4f4;border-right:1px solid #f4f4f4;"></div>
<div style="position:absolute;left:168px;top:663.77px;font-size:11.5px;line-height:11.5px;color:#000;white-space:nowrap;transform-origin:0 0;">0,0m</div>
<div style="position:absolute;left:246px;top:658px;width:54px;height:21px;background:#e2e2e2;border-top:2px solid #101010;border-left:2px solid #101010;border-bottom:1px solid #f4f4f4;border-right:1px solid #f4f4f4;"></div>
<div style="position:absolute;left:250px;top:663.77px;font-size:11.5px;line-height:11.5px;color:#000;white-space:nowrap;transform-origin:0 0;">0,0m</div>
<div style="position:absolute;left:326px;top:658px;width:34px;height:21px;background:#e2e2e2;border-top:2px solid #101010;border-left:2px solid #101010;border-bottom:1px solid #f4f4f4;border-right:1px solid #f4f4f4;"></div>
<div style="position:absolute;left:330px;top:663.77px;font-size:11.5px;line-height:11.5px;color:#000;white-space:nowrap;transform-origin:0 0;">0,0m</div>
<div style="position:absolute;left:220px;top:660px;width:11px;height:18px;background:#d0d0d0;border-right:1px solid #808080;border-bottom:1px solid #808080;box-shadow: inset 1px 1px 0 #f4f4f4;"></div>
<div style="position:absolute;left:222px;top:662px;width:0;height:0;border-left:3.5px solid transparent;border-right:3.5px solid transparent;border-bottom:4px solid #000;"></div>
<div style="position:absolute;left:222px;top:670px;width:0;height:0;border-left:3.5px solid transparent;border-right:3.5px solid transparent;border-top:4px solid #000;"></div>
<div style="position:absolute;left:303px;top:660px;width:11px;height:18px;background:#d0d0d0;border-right:1px solid #808080;border-bottom:1px solid #808080;box-shadow: inset 1px 1px 0 #f4f4f4;"></div>
<div style="position:absolute;left:305px;top:662px;width:0;height:0;border-left:3.5px solid transparent;border-right:3.5px solid transparent;border-bottom:4px solid #000;"></div>
<div style="position:absolute;left:305px;top:670px;width:0;height:0;border-left:3.5px solid transparent;border-right:3.5px solid transparent;border-top:4px solid #000;"></div>
<div style="position:absolute;left:360px;top:657px;width:43px;height:44px;background:#c8c8c8;border-left:1px solid #f0f0f0;border-top:1px solid #f0f0f0;border-right:1px solid #808080;border-bottom:1px solid #808080;"></div>
<svg style="position:absolute;left:368px;top:670px" width="28" height="16"><circle cx="6" cy="7" r="4.2" fill="none" stroke="#000" stroke-width="2.2"/><rect x="10" y="5.8" width="15" height="2.8" fill="#000"/><rect x="18" y="7" width="2.5" height="5" fill="#000"/><rect x="22" y="7" width="2.5" height="4" fill="#000"/></svg>
<div style="position:absolute;left:406px;top:657px;width:47px;height:22px;background:#c8c8c8;border-left:1px solid #f0f0f0;border-top:1px solid #f0f0f0;border-right:1px solid #707070;border-bottom:1px solid #707070;"></div>
<div style="position:absolute;left:409px;top:662.60px;font-size:11.7px;line-height:11.7px;color:#000;white-space:nowrap;transform-origin:0 0;transform:scaleX(0.9);">Auto Key</div>
<div style="position:absolute;left:406px;top:680px;width:47px;height:21px;background:#c8c8c8;border-left:1px solid #f0f0f0;border-top:1px solid #f0f0f0;border-right:1px solid #707070;border-bottom:1px solid #707070;"></div>
<div style="position:absolute;left:412px;top:685.10px;font-size:11.7px;line-height:11.7px;color:#000;white-space:nowrap;transform-origin:0 0;transform:scaleX(0.9);">Set Key</div>
<div style="position:absolute;left:457px;top:657px;width:115px;height:21px;background:#e4e4e4;border-top:2px solid #5a6068;border-left:2px solid #5a6068;border-bottom:1px solid #eeeeee;border-right:1px solid #eeeeee;"></div>
<div style="position:absolute;left:461px;top:661.60px;font-size:11.7px;line-height:11.7px;color:#000;white-space:nowrap;transform-origin:0 0;transform:scaleX(0.92);">Selected</div>
<div style="position:absolute;left:554px;top:659px;width:17px;height:18px;background:#f2f2f2;border-right:2px solid #6a6a6a;border-bottom:2px solid #6a6a6a;"></div>
<svg style="position:absolute;left:554px;top:659px" width="17" height="18"><path d="M4.3 7 L11.8 7 L8.05 11 Z" fill="#000"/></svg>
<div style="position:absolute;left:483px;top:680px;width:89px;height:21px;background:#c8c8c8;border-left:1px solid #f0f0f0;border-top:1px solid #f0f0f0;border-right:1px solid #707070;border-bottom:1px solid #707070;"></div>
<div style="position:absolute;left:328.5px;width:400px;text-align:center;top:685.10px;font-size:11.7px;line-height:11.7px;color:#000;white-space:nowrap;transform-origin:50% 0;transform:scaleX(0.86);">Key Filters...</div>
<svg style="position:absolute;left:455px;top:680px" width="26" height="22"><path d="M5 16.5 L15 16.5 M11 4.7 L20.5 4.7" stroke="#8080e0" stroke-width="1.2"/><path d="M6.2 9.7 L8.8 16.3 L14.8 4.7 L19.6 11" stroke="#d82030" stroke-width="1.3" fill="none"/><rect x="8" y="15.5" width="2" height="2" fill="#202020"/><rect x="14" y="3.8" width="2" height="2" fill="#202020"/><path d="M19 19.5 L23 15.5 L23 19.5 Z" fill="#fff"/><rect x="21" y="18" width="2" height="2" fill="#000"/></svg>
<div style="position:absolute;left:617px;top:653px;width:185px;height:1px;background:#707070;"></div>
<div style="position:absolute;left:605px;top:680px;width:63px;height:20px;background:#e2e2e2;border-top:2px solid #101010;border-left:2px solid #101010;border-bottom:1px solid #f4f4f4;border-right:1px solid #f4f4f4;"></div>
<div style="position:absolute;left:609px;top:685.27px;font-size:11.5px;line-height:11.5px;color:#000;white-space:nowrap;transform-origin:0 0;">0</div>
<div style="position:absolute;left:669px;top:682px;width:11px;height:18px;background:#d0d0d0;border-right:1px solid #808080;border-bottom:1px solid #808080;box-shadow: inset 1px 1px 0 #f4f4f4;"></div>
<div style="position:absolute;left:671px;top:684px;width:0;height:0;border-left:3.5px solid transparent;border-right:3.5px solid transparent;border-bottom:4px solid #000;"></div>
<div style="position:absolute;left:671px;top:692px;width:0;height:0;border-left:3.5px solid transparent;border-right:3.5px solid transparent;border-top:4px solid #000;"></div>
<svg width="802" height="705" style="position:absolute;left:0;top:0;"><defs><linearGradient id="gsq2" x1="0" y1="0" x2="1" y2="1"><stop offset="0" stop-color="#ffffff"/><stop offset="1" stop-color="#c4c4d4"/></linearGradient><radialGradient id="gstar" cx="0.5" cy="0.5" r="0.5"><stop offset="0" stop-color="#ffffff"/><stop offset="0.4" stop-color="#fff8c0"/><stop offset="1" stop-color="#fff8c0" stop-opacity="0"/></radialGradient><linearGradient id="garcb" x1="0" y1="1" x2="1" y2="0"><stop offset="0" stop-color="#303050"/><stop offset="0.5" stop-color="#a0a8d0"/><stop offset="1" stop-color="#404068"/></linearGradient><linearGradient id="gtri2" x1="0" y1="0" x2="1" y2="1"><stop offset="0" stop-color="#d8d8d8"/><stop offset="0.5" stop-color="#ffffff"/><stop offset="1" stop-color="#808080"/></linearGradient></defs><circle cx="631" cy="70.5" r="6" fill="url(#gstar)"/><path d="M631 63.5 L631 77.5 M624 70.5 L638 70.5 M626 65.5 L636 75.5 M636 65.5 L626 75.5" stroke="#fffbd0" stroke-width="0.8" opacity="0.8"/><circle cx="631" cy="70.5" r="2" fill="#fff"/><path d="M631.5 71.5 L635 83 L637 80.2 L640.5 84.5 L642.5 83 L639 78.5 L642.5 77.5 Z" fill="url(#gtri2)" stroke="#202020" stroke-width="0.9"/><path d="M654.5 66.5 L671.5 66.5 L671.5 83.5" stroke="#909090" stroke-width="0.6" fill="none" stroke-dasharray="1 1"/><path d="M654.5 66.5 L654.5 83.5" stroke="#909090" stroke-width="0.6" stroke-dasharray="1 1"/><path d="M658.5 83.5 A12.5 12.5 0 0 1 671 71" stroke="#2a2a50" stroke-width="8" fill="none"/><path d="M655.8 83.5 A15.2 15.2 0 0 1 671 68.3" stroke="#c8d0f8" stroke-width="1.8" fill="none"/><path d="M660.7 83.5 A10.3 10.3 0 0 1 671 73.2" stroke="#6a6a98" stroke-width="1.6" fill="none"/><rect x="653.5" y="65.5" width="2" height="2" fill="#000"/><rect x="670.5" y="82.5" width="2" height="2" fill="#000"/><path d="M691.8 72 L692.8 79 M691.8 72.5 L685 79 M691.8 72.5 L700.5 79" stroke="#505060" stroke-width="0.9"/><rect x="688.5" y="65.5" width="6.5" height="6.5" fill="url(#gsq2)" stroke="#40406a" stroke-width="1"/><rect x="682.5" y="78.5" width="4.5" height="4.5" fill="url(#gsq2)" stroke="#40406a" stroke-width="1"/><rect x="690.5" y="78.5" width="4.5" height="4.5" fill="url(#gsq2)" stroke="#40406a" stroke-width="1"/><rect x="698.5" y="78.5" width="4.5" height="4.5" fill="url(#gsq2)" stroke="#40406a" stroke-width="1"/><path d="M713.5 70 A8 8 0 0 0 713.5 80 M711 68.5 A10 10 0 0 0 711 81.5" stroke="#404040" stroke-width="0.8" fill="none"/><circle cx="722.8" cy="75" r="6.8" fill="#e0e0e0" stroke="#101010" stroke-width="1.6"/><path d="M722.8 69.5 L722.8 80.5 M717.3 75 L728.3 75 M718.9 71.1 L726.7 78.9 M726.7 71.1 L718.9 78.9" stroke="#707070" stroke-width="0.7"/><circle cx="722.8" cy="75" r="1.6" fill="#e02020"/><rect x="740.5" y="66.5" width="18.5" height="14.5" rx="1.5" fill="#fff" stroke="#303030" stroke-width="1.8"/><rect x="744.5" y="82" width="10" height="2.5" fill="#404040"/><rect x="748" y="80.5" width="3" height="2" fill="#404040"/><rect x="744" y="69" width="3.6" height="9" rx="1.8" fill="#4050c0"/><path d="M748.5 78.5 L752.5 69.5 L756.5 78.5 Z" fill="#e01010"/><path d="M771 67 Q777 65.5 786 69.5 L785 71 Q780 69.5 776 70 L771 70.5 Z" fill="#606060" stroke="#202020" stroke-width="0.6"/><rect x="775.8" y="67" width="3.5" height="3.5" fill="#e0e0e0"/><path d="M776 70.5 L779 70.5 L779.2 78 L779.8 85 L775.5 85 L776 78 Z" fill="#b03020" stroke="#202020" stroke-width="0.6"/><rect x="775.5" y="80" width="4.3" height="5" fill="#202020"/><path d="M633.2 277.5 L639.5 277.5" stroke="#000" stroke-width="1.3"/><path d="M639.5 272.5 L642 272.5 L642.8 275 L645 275 L645.8 272.5 L648 272.5 L648 281.5 L645.8 281.5 L645 279.5 L642.8 279.5 L642 281.5 L639.5 281.5 Z" fill="#b8b8b8" stroke="#000" stroke-width="1.2"/><rect x="642.5" y="276" width="2.5" height="2" fill="#f0f0f0"/><rect x="676" y="273" width="5" height="12" fill="#fff"/><path d="M673.8 272 Q676 272.5 676 274.5 L676 285 M681 285 L681 274.5 Q681 272.5 683.2 272" fill="none" stroke="#000" stroke-width="1.5"/><path d="M705 271.5 L713 281 L720 271.5" stroke="#a0a0a0" stroke-width="1" fill="none"/><circle cx="713" cy="281" r="1.8" fill="#e8e8e8" stroke="#a0a0a0" stroke-width="0.8"/><path d="M732 277 A4.5 5 0 0 1 741 277 L741 280 A4.5 4 0 0 1 732 280 Z M735 272.5 A2 2 0 0 1 738 272.5" stroke="#a0a0a0" stroke-width="1" fill="#e4e4e4"/><rect x="766.5" y="270.5" width="14" height="13" fill="#fff" stroke="#2030a0" stroke-width="1"/><rect x="766.5" y="270.5" width="14" height="3" fill="#2030a0"/><path d="M768 276 L771 276 M772 276 L775 276 M768 279 L771 279 M773 279 L780 279 M768 282 L771 282 M774 282 L780 282" stroke="#303030" stroke-width="1.5" stroke-dasharray="1 1"/><path d="M106 667 L106 664.5 A2.8 2.8 0 0 1 111.6 664.5 L111.6 667" stroke="#000" stroke-width="1.5" fill="none"/><rect x="105" y="666.5" width="8.5" height="7" fill="#000"/><rect x="105" y="668.5" width="8.5" height="1" fill="#b0b0b0"/><rect x="105" y="670.8" width="8.5" height="1" fill="#b0b0b0"/><rect x="129.5" y="660.5" width="14" height="14" fill="#c4c4c4" stroke="#000" stroke-width="1.3"/><path d="M136.5 660.5 L136.5 674.5 M129.5 667.5 L143.5 667.5" stroke="#606060" stroke-width="0.9"/><circle cx="136.5" cy="667.5" r="2" fill="#707070" stroke="#000" stroke-width="1.2"/><rect x="581" y="663" width="2.5" height="9" fill="#000"/><path d="M583.5 667.5 L590 663 L590 672 Z M589.5 667.5 L596.5 663 L596.5 672 Z" fill="#000"/><path d="M609.5 667.5 L615 663 L615 672 Z" fill="#000"/><rect x="616" y="663" width="2.2" height="9" fill="#000"/><rect x="619.5" y="663" width="2.2" height="9" fill="#000"/><rect x="631" y="661.5" width="14" height="12.5" fill="none" stroke="#000" stroke-width="2"/><path d="M635 663.5 L642 667.7 L635 672 Z" fill="#000"/><path d="M645 677 L648 674 L648 677 Z" fill="#fff"/><rect x="654" y="663" width="2.2" height="9" fill="#000"/><rect x="657.5" y="663" width="2.2" height="9" fill="#000"/><path d="M660.5 663 L667 667.5 L660.5 672 Z" fill="#000"/><path d="M678.5 663 L685 667.5 L678.5 672 Z M684.5 663 L691 667.5 L684.5 672 Z" fill="#000"/><rect x="692" y="663" width="2.5" height="9" fill="#000"/><rect x="603" y="660" width="1" height="15" fill="#808080"/><rect x="604" y="660" width="1" height="15" fill="#f0f0f0"/><rect x="674" y="660" width="1" height="15" fill="#808080"/><rect x="675" y="660" width="1" height="15" fill="#f0f0f0"/><rect x="603" y="682" width="1" height="17" fill="#808080"/><rect x="604" y="682" width="1" height="17" fill="#f0f0f0"/><rect x="703" y="660" width="1" height="16" fill="#808080"/><rect x="704" y="660" width="1" height="16" fill="#f0f0f0"/><rect x="703" y="682" width="1" height="16" fill="#808080"/><rect x="704" y="682" width="1" height="16" fill="#f0f0f0"/><rect x="584" y="686" width="1.6" height="7" fill="#000"/><path d="M585.5 689.5 L589.5 686.5 L589.5 692.5 Z M593.5 689.5 L589.5 686.5 L589.5 692.5 Z" fill="#000"/><rect x="593.5" y="686" width="1.6" height="7" fill="#000"/><rect x="685.5" y="684.5" width="11" height="10" fill="#fff" stroke="#000" stroke-width="1.1"/><rect x="685.5" y="684.5" width="11" height="2" fill="#000"/><circle cx="693.5" cy="693" r="4" fill="#fff" stroke="#c02020" stroke-width="1"/><path d="M693.5 690.5 L693.5 693.2 L691.5 693.2" stroke="#c02020" stroke-width="0.9" fill="none"/><circle cx="714.6" cy="664.8" r="4.8" fill="#e4e8f4" stroke="#20208a" stroke-width="1.4"/><path d="M718 668.5 L722.5 673.5" stroke="#20208a" stroke-width="2.4"/><path d="M734.5 660.5 L747.5 660.5 L747.5 670.5 L734.5 670.5 Z M741 660.5 L741 670.5 M734.5 665.5 L747.5 665.5" stroke="#a02020" stroke-width="1.1" fill="none"/><circle cx="735" cy="669.5" r="3.4" fill="#e8ecff" stroke="#2030a0" stroke-width="1.2"/><path d="M737.5 672 L741 675.5" stroke="#1020a0" stroke-width="1.8"/><path d="M754.5 663 L754.5 660.5 L757 660.5 M767.5 660.5 L770 660.5 L770 663 M770 671 L770 673.5 L767.5 673.5 M757 673.5 L754.5 673.5 L754.5 671" stroke="#000" stroke-width="1.1" fill="none"/><path d="M756.5 664 L759.5 661 L767.5 661 L767.5 669 L764.5 672 L756.5 672 Z" fill="#c8c8d0" stroke="#20208a" stroke-width="1.2"/><path d="M756.5 664 L764.5 664 L764.5 672 M764.5 664 L767.5 661" stroke="#20208a" stroke-width="1.1" fill="none"/><path d="M764.5 664 L767.5 661 L767.5 669 L764.5 672 Z" fill="#909090"/><path d="M757.5 663.5 L760 661.5 L766.5 661.5 L764 663.5 Z" fill="#f8f8f8"/><path d="M771 676 L774 673 L774 676 Z M793 676 L796 673 L796 676 Z" fill="#fff"/><path d="M780.5 660.5 L793.5 660.5 L793.5 670.5 L780.5 670.5 Z M787 660.5 L787 670.5 M780.5 665.5 L793.5 665.5" stroke="#a02020" stroke-width="1.1" fill="none"/><path d="M777 667.5 L779.5 665 L787.5 665 L787.5 673 L785 675.5 L777 675.5 Z" fill="#d0d0dc" stroke="#20208a" stroke-width="1.2"/><path d="M777 667.5 L785 667.5 L785 675.5 M785 667.5 L787.5 665" stroke="#20208a" stroke-width="1.1" fill="none"/><path d="M708 682.5 L724 689.5 L708 696.5 Z" fill="#d8d8d8" stroke="#000" stroke-width="1.3"/><path d="M716 686 A5 5 0 0 1 716 693" stroke="#000" stroke-width="1" fill="none"/><path d="M734 690 Q732 686 734 684 L736 688 L735.5 682 Q737 680 738.5 682 L739 687 L739.5 681 Q741 680 742.5 681.5 L742.5 687 L743.5 683 Q745 682 746 684 L745.5 692 Q744 697 739 697 Q735 697 734 690 Z" fill="#f0f0f0" stroke="#000" stroke-width="1"/><circle cx="762" cy="690" r="5" fill="none" stroke="#000" stroke-width="1"/><path d="M762 682 L762 690 L770 690 M762 690 L756 695" stroke="#2030a0" stroke-width="1.2" fill="none"/><path d="M760 684 L762 681.5 L764 684 Z M768 688 L770.5 690 L768 692 Z M755 693 L755.5 696 L758 695 Z" fill="#000"/><rect x="778.5" y="682.5" width="11" height="10" fill="#fff" stroke="#2030a0" stroke-width="1.3"/><rect x="783.5" y="687.5" width="9" height="9" fill="#fff" stroke="#000" stroke-width="1.3"/><rect x="783.5" y="687.5" width="6" height="5" fill="#fff"/><path d="M781 685 L787 690" stroke="#000" stroke-width="1" stroke-dasharray="1 1"/><path d="M723 700 L726 697 L726 700 Z M745 700 L748 697 L748 700 Z M769 700 L772 697 L772 700 Z" fill="#fff"/></svg>
<svg width="802" height="705" style="position:absolute;left:0;top:0;"><text transform="translate(7.8 74) scale(0.89 1)" x="0" y="0" fill="#e2e2e2" font-size="12" font-family="Liberation Sans">Top</text><text transform="translate(317.2 74) scale(0.89 1)" x="0" y="0" fill="#e2e2e2" font-size="12" font-family="Liberation Sans">Front</text><text transform="translate(7.2 350) scale(0.89 1)" x="0" y="0" fill="#e2e2e2" font-size="12" font-family="Liberation Sans">Left</text><text transform="translate(317.2 349.8) scale(0.89 1)" x="0" y="0" fill="#e2e2e2" font-size="12" font-family="Liberation Sans">Perspective</text><clipPath id="c1"><rect x="2" y="61" width="303" height="269"/></clipPath><g clip-path="url(#c1)"><rect x="154" y="61" width="1" height="269" fill="#000000"/><rect x="2" y="196" width="303" height="1" fill="#000000"/><rect x="150" y="82" width="10" height="1" fill="#ffffff"/><rect x="150" y="311" width="10" height="1" fill="#ffffff"/><rect x="150" y="82" width="1" height="230" fill="#ffffff"/><rect x="159" y="82" width="1" height="230" fill="#ffffff"/><rect x="155" y="163" width="33" height="33" fill="#b0a040" fill-opacity="0.45"/><rect x="154" y="163" width="34" height="1" fill="#ffff00"/><rect x="187" y="163" width="1" height="34" fill="#ffff00"/><rect x="154" y="99" width="1" height="79" fill="#ffff00"/><rect x="175" y="196" width="54" height="1" fill="#ffff00"/><polygon points="150,123.5 155,99 160,123.5" fill="#00a000" /><polygon points="227,191.5 253,196.5 227,202" fill="#e00000" /><text x="154" y="91" fill="#ffff00" font-size="10.5" font-family="Liberation Sans" >y</text><text x="256" y="191" fill="#ffff00" font-size="10.5" font-family="Liberation Sans" >x</text><rect x="28" y="276" width="1" height="30" fill="#00a000"/><rect x="28" y="305" width="26" height="1" fill="#e00000"/><text x="28" y="275" fill="#00a000" font-size="10.5" font-family="Liberation Sans" >y</text><text x="28" y="302" fill="#0000e0" font-size="10.5" font-family="Liberation Sans" >z</text><text x="53" y="302" fill="#e00000" font-size="10.5" font-family="Liberation Sans" >x</text></g><clipPath id="c2"><rect x="313" y="61" width="302" height="269"/></clipPath><g clip-path="url(#c2)"><rect x="464" y="61" width="1" height="269" fill="#000000"/><rect x="313" y="311" width="302" height="1" fill="#000000"/><rect x="456" y="82" width="19" height="1" fill="#ffffff"/><rect x="456" y="82" width="1" height="107" fill="#ffffff"/><rect x="474" y="82" width="1" height="107" fill="#ffffff"/><rect x="456" y="189" width="1" height="123" fill="#cfcfcf"/><rect x="474" y="189" width="1" height="123" fill="#cfcfcf"/><rect x="456" y="311" width="19" height="1" fill="#cfcfcf"/><rect x="464" y="214" width="1" height="77" fill="#0000e0"/><polygon points="459.5,238.5 464.5,214 469.5,238.5" fill="#0000e0" /><rect x="464" y="278" width="34" height="1" fill="#0000e0"/><rect x="497" y="278" width="1" height="34" fill="#e00000"/><rect x="485" y="311" width="53" height="1" fill="#ffff00"/><polygon points="537,305.5 563,311.5 537,316.5" fill="#e00000" /><text x="464" y="207" fill="#0000e0" font-size="10.5" font-family="Liberation Sans" >z</text><text x="564" y="306" fill="#ffff00" font-size="10.5" font-family="Liberation Sans" >x</text><rect x="339" y="281" width="1" height="25" fill="#0000e0"/><rect x="339" y="305" width="26" height="1" fill="#e00000"/><text x="338" y="277" fill="#0000e0" font-size="10.5" font-family="Liberation Sans" >z</text><text x="340" y="300" fill="#00a000" font-size="10.5" font-family="Liberation Sans" >y</text><text x="364" y="302" fill="#e00000" font-size="10.5" font-family="Liberation Sans" >x</text></g><clipPath id="c3"><rect x="2" y="338" width="303" height="269"/></clipPath><g clip-path="url(#c3)"><rect x="155" y="338" width="1" height="269" fill="#000000"/><rect x="2" y="537" width="303" height="1" fill="#000000"/><rect x="26" y="409" width="259" height="1" fill="#ffffff"/><rect x="26" y="537" width="259" height="1" fill="#ffffff"/><rect x="26" y="409" width="1" height="129" fill="#ffffff"/><rect x="284" y="409" width="1" height="129" fill="#ffffff"/><rect x="155" y="441" width="1" height="78" fill="#0000e0"/><polygon points="150.5,464.5 155.5,441 160.5,464.5" fill="#0000e0" /><rect x="122" y="504" width="34" height="1" fill="#0000e0"/><rect x="122" y="504" width="1" height="34" fill="#00a000"/><rect x="83" y="537" width="53" height="1" fill="#ffff00"/><polygon points="83,531.5 57,537.5 83,542.5" fill="#00a000" /><text x="154" y="434" fill="#0000e0" font-size="10.5" font-family="Liberation Sans" >z</text><text x="53" y="532" fill="#ffff00" font-size="10.5" font-family="Liberation Sans" >y</text><rect x="28" y="558" width="1" height="25" fill="#0000e0"/><rect x="5" y="582" width="24" height="1" fill="#00a000"/><text x="28" y="554" fill="#0000e0" font-size="10.5" font-family="Liberation Sans" >z</text><text x="4" y="577" fill="#00a000" font-size="10.5" font-family="Liberation Sans" >y</text><text x="29" y="579" fill="#e00000" font-size="10.5" font-family="Liberation Sans" >x</text></g><clipPath id="c4"><rect x="313" y="338" width="302" height="269"/></clipPath><g clip-path="url(#c4)"><line x1="313" y1="416" x2="617" y2="337" stroke="#737373" stroke-width="1" /><line x1="313" y1="365" x2="460" y2="336" stroke="#737373" stroke-width="1" /><line x1="376" y1="352.8" x2="617" y2="413.4" stroke="#737373" stroke-width="1" /><line x1="452" y1="337" x2="617" y2="363" stroke="#737373" stroke-width="1" /><line x1="313" y1="422" x2="617" y2="602" stroke="#000000" stroke-width="1.1" /><line x1="313" y1="600.5" x2="617" y2="421" stroke="#000000" stroke-width="1.1" /><ellipse cx="560" cy="410" rx="32.5" ry="16.5" fill="#828282" stroke="#8f8f8f" stroke-width="4.5"/><polygon points="561.1673151750973,373.0194552529183 541.7120622568093,379.8287937743191 560.1945525291828,389.55642023346303 580.6225680933852,381.7743190661479" fill="#9b9b9b" stroke="#8a8a8a" stroke-width="0.8"/><polygon points="541.7120622568093,379.8287937743191 560.1945525291828,389.55642023346303 561.1673151750973,414.84824902723733 542.6848249027238,405.1206225680934" fill="#979797" stroke="#8a8a8a" stroke-width="0.8"/><polygon points="560.1945525291828,389.55642023346303 580.6225680933852,381.7743190661479 579.6498054474708,405.1206225680934 561.1673151750973,414.84824902723733" fill="#929292" stroke="#8a8a8a" stroke-width="0.8"/><polygon points="401,406 404.5,403 551.5,460 548,463" fill="#c2a656" /><polygon points="548,463 551.5,460 540.5,555 537,558" fill="#ae9448" /><polygon points="401,406 548,463 537,558 405,478" fill="#2f2915" /><line x1="400" y1="404.5" x2="434.1" y2="417.04" stroke="#ffffff" stroke-width="1" /><line x1="400" y1="404.5" x2="400.88" y2="420.67" stroke="#ffffff" stroke-width="1" /><line x1="555" y1="461.5" x2="551.81" y2="482.29" stroke="#ffffff" stroke-width="1" /><line x1="555" y1="461.5" x2="520.9" y2="448.96" stroke="#ffffff" stroke-width="1" /><line x1="540.5" y1="556" x2="510.47" y2="538.84" stroke="#ffffff" stroke-width="1" /><line x1="540.5" y1="556" x2="543.69" y2="535.21" stroke="#ffffff" stroke-width="1" /><line x1="404" y1="478" x2="403.12" y2="461.83" stroke="#ffffff" stroke-width="1" /><line x1="404" y1="478" x2="434.03" y2="495.16" stroke="#ffffff" stroke-width="1" /><line x1="549" y1="464" x2="545.976" y2="489.11" stroke="#ffffff" stroke-width="1" /><line x1="537.8" y1="557" x2="540.264" y2="536.54" stroke="#ffffff" stroke-width="1" /><line x1="547" y1="463.5" x2="510.5" y2="449.25" stroke="#ffffff" stroke-width="1" /><polygon points="464.1121743753323,487.14956583377636 442.8468899521531,497.78220804536596 463.2261208576998,510.1869572922204 486.2635123161439,497.78220804536596" fill="#584a1c" /><line x1="464.1121743753323" y1="487.14956583377636" x2="442.8468899521531" y2="497.78220804536596" stroke="#ffff00" stroke-width="1.2" /><line x1="464.1121743753323" y1="487.14956583377636" x2="486.2635123161439" y2="497.78220804536596" stroke="#ffff00" stroke-width="1.2" /><line x1="442.8468899521531" y1="497.78220804536596" x2="418.03739145844406" y2="484.49140528087895" stroke="#ffff00" stroke-width="1.2" /><line x1="486.2635123161439" y1="497.78220804536596" x2="510.1869572922204" y2="484.49140528087895" stroke="#ffff00" stroke-width="1.2" /><line x1="441.9608364345206" y1="471.200602516392" x2="441.9608364345206" y2="497.78220804536596" stroke="#00c000" stroke-width="1.2" /><line x1="486.79514442672337" y1="471.200602516392" x2="486.79514442672337" y2="497.78220804536596" stroke="#e00000" stroke-width="1.2" /><line x1="441.9608364345206" y1="471.200602516392" x2="464.1121743753323" y2="482.719298245614" stroke="#0000e0" stroke-width="1.2" /><line x1="486.79514442672337" y1="471.200602516392" x2="464.1121743753323" y2="482.719298245614" stroke="#0000e0" stroke-width="1.2" /><line x1="464.1121743753323" y1="417.15133794081163" x2="464.1121743753323" y2="494.23799397483606" stroke="#0000e0" stroke-width="1.2" /><polygon points="464.1121743753323,417.15133794081163 458.7958532695375,446.39110402268295 461.4540138224349,447.80878965089494 466.77033492822966,447.80878965089494 469.4284954811271,446.39110402268295" fill="#0000e0" /><polygon points="405.6326422115896,476.51692362218677 416.26528442317914,488.03561935140885 421.58160552897397,480.06113769271667" fill="#00a000" /><polygon points="524.3638135743399,475.63087010455433 506.6427432216906,480.06113769271667 511.9590643274854,488.03561935140885" fill="#e00000" /><text x="463" y="412" fill="#0000e0" font-size="10.5" font-family="Liberation Sans" >z</text><text x="525" y="471" fill="#ffff00" font-size="10.5" font-family="Liberation Sans" >x</text><text x="403" y="471" fill="#ffff00" font-size="10.5" font-family="Liberation Sans" >y</text><line x1="338.5" y1="582" x2="338.5" y2="561" stroke="#0000e0" stroke-width="1.2" /><line x1="338.5" y1="582" x2="322" y2="574" stroke="#00a000" stroke-width="1.2" /><line x1="338.5" y1="582" x2="356" y2="573" stroke="#e00000" stroke-width="1.2" /><text x="338" y="556" fill="#0000e0" font-size="10.5" font-family="Liberation Sans" >z</text><text x="321" y="567" fill="#00a000" font-size="10.5" font-family="Liberation Sans" >y</text><text x="357" y="568" fill="#e00000" font-size="10.5" font-family="Liberation Sans" >x</text></g></svg>
<div style="position:absolute;left:0px;top:0px;width:802px;height:1px;background:#294853;"></div>
<div style="position:absolute;left:0px;top:0px;width:1px;height:705px;background:#294853;"></div>
<div style="position:absolute;left:801px;top:0px;width:1px;height:705px;background:#294853;"></div>
<div style="position:absolute;left:0px;top:703px;width:802px;height:2px;background:#294853;"></div>
</body></html>
